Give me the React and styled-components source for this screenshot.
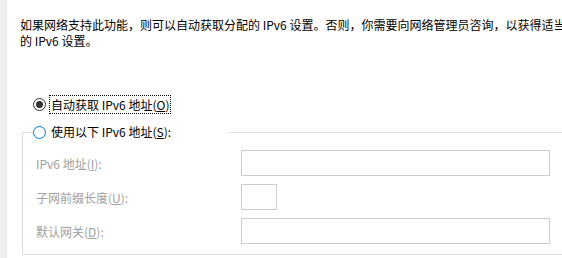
import React from 'react';
import styled, { createGlobalStyle } from 'styled-components';

const GlobalStyle = createGlobalStyle`
  html, body {
    margin: 0;
    padding: 0;
    background: #ffffff;
  }
  body {
    font-family: "Noto Sans CJK SC", "Noto Sans", sans-serif;
  }
`;

const Page = styled.div`
  display: flex;
  width: 562px;
  height: 258px;
  overflow: hidden;
  background: #ffffff;
`;

const SideStrip = styled.div`
  flex: 0 0 6px;
  background: #f0f0f0;
  border-right: 1px solid #e6e6e6;
`;

const Content = styled.div`
  flex: 1 0 auto;
  display: flex;
  flex-direction: column;
  min-width: 0;
`;

const Description = styled.p`
  margin: 17px 0 0 13px;
  font-size: 12px;
  line-height: 16px;
  color: #000000;
`;

const Line = styled.span`
  display: block;
  white-space: nowrap;
`;

const RadioRow = styled.label`
  display: flex;
  align-items: center;
  gap: 3px;
  height: ${props => props.$height || 19}px;
  margin-left: ${props => props.$indent || 0}px;
  margin-top: ${props => props.$top || 0}px;
  font-size: 12px;
  color: #000000;
  white-space: nowrap;
`;

const RadioCircle = styled.span`
  box-sizing: border-box;
  flex: 0 0 13px;
  width: 13px;
  height: 13px;
  border-radius: 50%;
  background: #ffffff;
  border: 1px solid ${props => (props.$checked ? '#333333' : '#0078d7')};
  display: flex;
  align-items: center;
  justify-content: center;

  &::after {
    content: '';
    display: ${props => (props.$checked ? 'block' : 'none')};
    width: 7px;
    height: 7px;
    border-radius: 50%;
    background: #333333;
  }
`;

const RadioText = styled.span`
  box-sizing: border-box;
  height: ${props => (props.$focused ? 19 : 16)}px;
  display: flex;
  align-items: center;
  padding: 0 1px;
  border: 1px ${props => (props.$focused ? 'dotted #000000' : 'solid transparent')};
  line-height: 14px;
`;

const Key = styled.u`
  text-decoration: underline;
  text-underline-offset: 1px;
`;

const GroupBox = styled.fieldset`
  box-sizing: border-box;
  margin: 11px 0 0 15px;
  padding: 11px 0 10px 0;
  width: 600px;
  border: 1px solid #dcdcdc;
  min-width: 0;
`;

const GroupLegend = styled.legend`
  margin-left: 10px;
  padding: 0;
  width: 196px;
`;

const FieldGrid = styled.div`
  display: grid;
  grid-template-columns: 205px auto;
  row-gap: 8px;
  padding-left: 13px;
  align-items: center;
`;

const FieldLabel = styled.span`
  font-size: 12px;
  color: #a0a0a0;
  white-space: nowrap;
`;

const TextBox = styled.div`
  box-sizing: border-box;
  width: ${props => props.$width}px;
  height: 26px;
  border: 1px solid #cccccc;
  background: #ffffff;
`;

const fields = [
  { label: 'IPv6 地址', key: 'I', width: 309 },
  { label: '子网前缀长度', key: 'U', width: 36 },
  { label: '默认网关', key: 'D', width: 309 },
];

function App() {
  return (
    <>
      <GlobalStyle />
      <Page>
        <SideStrip />
        <Content>
          <Description>
            <Line>如果网络支持此功能，则可以自动获取分配的 IPv6 设置。否则，你需要向网络管理员咨询，以获得适当</Line>
            <Line>的 IPv6 设置。</Line>
          </Description>

          <RadioRow $indent={26} $top={46}>
            <RadioCircle $checked />
            <RadioText $focused>
              自动获取 IPv6 地址(<Key>O</Key>)
            </RadioText>
          </RadioRow>

          <GroupBox>
            <GroupLegend>
              <RadioRow $height={14}>
                <RadioCircle />
                <RadioText>
                  使用以下 IPv6 地址(<Key>S</Key>):
                </RadioText>
              </RadioRow>
            </GroupLegend>
            <FieldGrid>
              {fields.map(field => (
                <React.Fragment key={field.key}>
                  <FieldLabel>
                    {field.label}(<Key>{field.key}</Key>):
                  </FieldLabel>
                  <TextBox $width={field.width} />
                </React.Fragment>
              ))}
            </FieldGrid>
          </GroupBox>
        </Content>
      </Page>
    </>
  );
}

export default App;
